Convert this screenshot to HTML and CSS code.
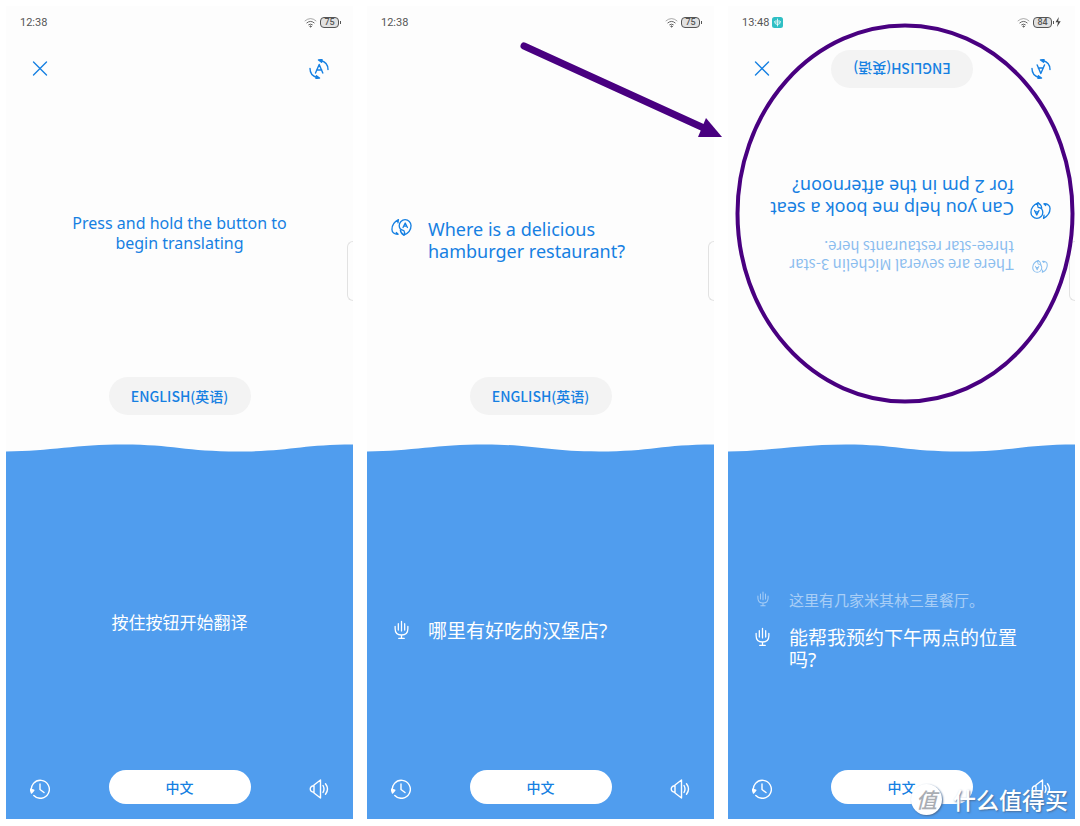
FILE: index.html
```html
<!DOCTYPE html>
<html lang="zh-CN">
<head>
<meta charset="utf-8">
<title>Translator</title>
<link rel="stylesheet" href="styles.css">
</head>
<body>
<svg class="defs" aria-hidden="true">
  <symbol id="close" viewBox="0 0 20 20"><path d="M3.500 3 16.500 16M16.500 3 3.500 16"/></symbol>
  <symbol id="flip" viewBox="0 0 20 20"><path d="M6.500 14 10.200 5.500 13.800 14M7.600 11H12.800"/><path d="M12 1.500Q19 3.500 19 10.500M8 18.500Q1 16.500 1 9.500"/><path d="M9.500 1 13 .6 12.600 3.200ZM10.500 19 7 19.400 7.400 16.800Z" fill="currentColor"/></symbol>
  <symbol id="drops" viewBox="0 0 22 20"><path d="M7.800 1.300C3.500 3.500 1 7 1 11.500 1 14.500 3.500 16.800 7.500 16.500L5.500 14.800M7.800 1.300 7.300 4.500"/><path d="M14.800 1.300A6.200 6.200 0 0 0 8.600 7.500C8.600 10.500 10.500 12.300 13.500 12.700 14.500 14 14.500 15.500 13.500 17.500 18.500 15.500 21 11.500 21 7.500A6.200 6.200 0 0 0 14.800 1.300Z"/><path d="M9.800 12Q10 15.500 13.500 17.500M12.600 9.500 14.900 4.800 17.200 9.500M13.500 8H16.300"/></symbol>
  <symbol id="mic" viewBox="0 0 16 22"><path d="M1 7V9.500C1 14 3.500 16.500 8 16.500S15 14 15 9.500V7M8 16.500V20M5 20.300H11M4.500 4V11M8 1.500V12M11.500 4V11"/></symbol>
  <symbol id="history" viewBox="0 0 20 20"><path d="M1.600 12.500A9 9 0 1 1 3.800 16.500M10 5V10.500L14 13.500"/><path d="M.3 10.300 3.800 11.200 1.500 14Z" fill="currentColor"/></symbol>
  <symbol id="speaker" viewBox="0 0 20 20"><path d="M5 6 11.500 1V19L5 14ZM5 6.800C0 6.500 0 13.500 5 13.200M14 6.500Q16 10 14 13.500M16.500 4.800Q20.500 10 16.500 15.200"/></symbol>
  <symbol id="wifi" viewBox="0 0 14 12"><path d="M1 4.200Q7-1 13 4.200" opacity=".55"/><path d="M3 6.400Q7 3 11 6.400M5 8.400Q7 7 9 8.400"/><circle cx="7" cy="10.300" r=".7"/></symbol>
  <symbol id="wave" viewBox="0 0 347 8" preserveAspectRatio="none"><path d="M0 7.500C45 7 70 .5 118 .5S180 7.500 232 7.500 295 .5 347 .5V8H0Z"/></symbol>
</svg>

<main class="board">
  <section class="phone">
    <div class="half top">
      <header class="status"><time>12:38</time><span class="signals"><svg class="wifi"><use href="#wifi"/></svg><span class="battery">75</span></span></header>
      <div class="toolbar">
        <button class="icon blue" aria-label="Close"><svg><use href="#close"/></svg></button>
        <button class="icon blue" aria-label="Flip text"><svg><use href="#flip"/></svg></button>
      </div>
      <p class="hint latin">Press and hold the button to<br>begin translating</p>
      <button class="pill soft">ENGLISH(英语)</button>
      <svg class="wave"><use href="#wave"/></svg>
      <span class="handle"></span>
    </div>
    <div class="half bottom">
      <p class="hint">按住按钮开始翻译</p>
      <div class="toolbar">
        <button class="icon" aria-label="History"><svg><use href="#history"/></svg></button>
        <button class="pill">中文</button>
        <button class="icon" aria-label="Speaker"><svg><use href="#speaker"/></svg></button>
      </div>
    </div>
  </section>

  <section class="phone">
    <div class="half top">
      <header class="status"><time>12:38</time><span class="signals"><svg class="wifi"><use href="#wifi"/></svg><span class="battery">75</span></span></header>
      <div class="toolbar"></div>
      <div class="talk lowered">
        <div class="line"><svg class="drops"><use href="#drops"/></svg><p>Where is a delicious<br>hamburger restaurant?</p></div>
      </div>
      <button class="pill soft">ENGLISH(英语)</button>
      <svg class="wave"><use href="#wave"/></svg>
      <span class="handle"></span>
    </div>
    <div class="half bottom">
      <div class="talk lowered">
        <div class="line"><svg class="mic"><use href="#mic"/></svg><p>哪里有好吃的汉堡店?</p></div>
      </div>
      <div class="toolbar">
        <button class="icon" aria-label="History"><svg><use href="#history"/></svg></button>
        <button class="pill">中文</button>
        <button class="icon" aria-label="Speaker"><svg><use href="#speaker"/></svg></button>
      </div>
    </div>
  </section>

  <section class="phone">
    <div class="half top">
      <header class="status"><span class="clock"><time>13:48</time><svg class="badge" viewBox="0 0 11 11"><rect width="11" height="11" rx="2.500" fill="#2fbfc4" stroke="none"/><path d="M2.500 4.500Q2.500 7.500 5.500 7.500T8.500 4.500M5.500 2V9M4 3.500V5.500M7 3.500V5.500" stroke="#fff" stroke-width=".8" fill="none"/></svg></span><span class="signals"><svg class="wifi"><use href="#wifi"/></svg><span class="battery">84</span><svg class="bolt" viewBox="0 0 6 10"><path d="M3.800 0 .5 5.200H3L2 10 5.700 4.300H3.200Z"/></svg></span></header>
      <div class="toolbar">
        <button class="icon blue" aria-label="Close"><svg><use href="#close"/></svg></button>
        <button class="pill soft flipped">ENGLISH(英语)</button>
        <button class="icon blue flipped" aria-label="Flip text"><svg><use href="#flip"/></svg></button>
      </div>
      <div class="talk facing flipped">
        <div class="line past"><svg class="drops"><use href="#drops"/></svg><p>There are several Michelin 3-star<br>three-star restaurants here.</p></div>
        <div class="line"><svg class="drops"><use href="#drops"/></svg><p>Can you help me book a seat<br>for 2 pm in the afternoon?</p></div>
      </div>
      <svg class="wave"><use href="#wave"/></svg>
      <span class="handle"></span>
    </div>
    <div class="half bottom">
      <div class="talk lowered">
        <div class="line past"><svg class="mic"><use href="#mic"/></svg><p>这里有几家米其林三星餐厅。</p></div>
        <div class="line"><svg class="mic"><use href="#mic"/></svg><p>能帮我预约下午两点的位置吗?</p></div>
      </div>
      <div class="toolbar">
        <button class="icon" aria-label="History"><svg><use href="#history"/></svg></button>
        <button class="pill">中文</button>
        <button class="icon" aria-label="Speaker"><svg><use href="#speaker"/></svg></button>
      </div>
    </div>
  </section>

  <svg class="marks" viewBox="0 0 1080 826" preserveAspectRatio="none" aria-hidden="true">
    <ellipse cx="905" cy="213.500" rx="167.500" ry="188"/>
    <path class="shaft" d="M524 46 706 129"/>
    <path class="head" d="M706 118 722 137H698Z"/>
  </svg>
  <div class="watermark"><span class="seal">值</span><span>什么值得买</span></div>
</main>
</body>
</html>
```

FILE: styles.css
```css
* { box-sizing: border-box; }
body {
  margin: 0;
  background: #fff;
  font-family: "Noto Sans", "Noto Sans CJK SC", sans-serif;
}
p { margin: 0; }
button {
  margin: 0;
  padding: 0;
  border: 0;
  background: none;
  font: inherit;
}
svg {
  display: block;
  fill: none;
  stroke: currentColor;
  stroke-linecap: round;
  stroke-linejoin: round;
}
.defs { position: absolute; width: 0; height: 0; }

.board {
  position: relative;
  display: grid;
  grid-template-columns: repeat(3, 1fr);
  gap: 14px;
  min-height: 100vh;
  padding: 6px 5px 7px 6px;
}
.phone {
  display: grid;
  grid-template-rows: 446fr 367fr;
  background: #fdfdfd;
}
.half { position: relative; display: flex; flex-direction: column; align-items: center; }
.top { color: #1680e2; }
.bottom { color: #fff; background: #509dee; padding-bottom: 15px; }

.status {
  display: flex;
  align-self: stretch;
  justify-content: space-between;
  align-items: center;
  height: 32px;
  padding: 0 14px;
  color: #555;
  font: 11px Roboto, sans-serif;
}
.clock, .signals { display: flex; align-items: center; gap: 3px; }
.badge { width: 11px; height: 11px; }
.wifi { width: 13px; height: 11px; }
.bolt { width: 6px; height: 10px; fill: #444; stroke: none; }
.battery {
  position: relative;
  width: 19px;
  height: 11px;
  border: 1px solid #555;
  border-radius: 4px;
  background: #e2e2e2;
  font-size: 9px;
  font-weight: 500;
  line-height: 9px;
  text-align: center;
}
.battery::after {
  content: "";
  position: absolute;
  top: 3px;
  right: -3px;
  width: 1px;
  height: 3px;
  background: #555;
}

.toolbar {
  display: flex;
  align-self: stretch;
  justify-content: space-between;
  align-items: center;
  padding: 0 24px;
}
.top .toolbar { height: 38px; margin-top: 12px; }
.icon { width: 20px; height: 20px; color: #fff; }
.icon svg { width: 20px; height: 20px; stroke-width: 1.4; }
.icon.blue { color: #1680e2; }
.bottom .icon { margin-top: 4px; }
.pill {
  width: 142px;
  height: 34px;
  border-radius: 19px;
  background: #fff;
  color: #1680e2;
  font-family: "Noto Sans CJK SC", sans-serif;
  font-size: 14px;
  font-weight: 500;
}
.soft { height: 38px; background: #f3f3f3; }
.top > .pill { margin-bottom: 29px; }
.flipped { transform: rotate(180deg); }

.hint {
  flex: 1;
  display: flex;
  flex-direction: column;
  justify-content: center;
  font-size: 17px;
  line-height: 20px;
  text-align: center;
}
.latin { font-size: 16px; }
.bottom .hint { padding-top: 23px; }

.talk {
  flex: 1;
  align-self: stretch;
  display: flex;
  flex-direction: column;
  justify-content: center;
  gap: 18px;
  padding: 0 42px 0 24px;
}
.lowered { padding-top: 14px; }
.bottom .lowered { padding-top: 40px; }
.facing { justify-content: flex-end; padding: 0 24px 88px; }
.line {
  display: grid;
  grid-template-columns: 21px 1fr;
  column-gap: 16px;
  font-size: 19px;
  line-height: 22px;
}
.top .line { font-size: 18px; }
.line.past {
  opacity: 0.5;
  font-family: "Noto Sans CJK SC", sans-serif;
  font-size: 15px;
  line-height: 18px;
}
.top .past { font-size: 15px; }
.drops, .mic { justify-self: center; width: 21px; height: 20px; stroke-width: 1.4; }
.past .drops, .past .mic { width: 16px; height: 16px; }

.wave { width: 100%; height: 8px; fill: #509dee; stroke: none; }
.handle {
  position: absolute;
  top: 235px;
  right: 0;
  width: 6px;
  height: 60px;
  border: 1px solid #e2e2e2;
  border-right: 0;
  border-radius: 6px 0 0 6px;
}

.marks {
  position: absolute;
  inset: 0;
  width: 100%;
  height: 100%;
  color: #490080;
  pointer-events: none;
}
.marks ellipse { stroke-width: 4; }
.shaft { stroke-width: 7; }
.head { fill: currentColor; stroke: none; }

.watermark {
  position: absolute;
  right: 12px;
  bottom: 11px;
  display: flex;
  align-items: center;
  gap: 11px;
  color: #fff;
  font: 500 23px/32px "Noto Sans CJK SC", sans-serif;
  text-shadow: 1px 1px 2px #4a6d99;
  pointer-events: none;
}
.seal {
  width: 31px;
  height: 31px;
  border-radius: 50%;
  background: #fff;
  box-shadow: 1px 1px 2px #4a6d99;
  color: #a9adb3;
  font-size: 21px;
  font-style: italic;
  line-height: 30px;
  text-align: center;
  text-shadow: none;
}
```
